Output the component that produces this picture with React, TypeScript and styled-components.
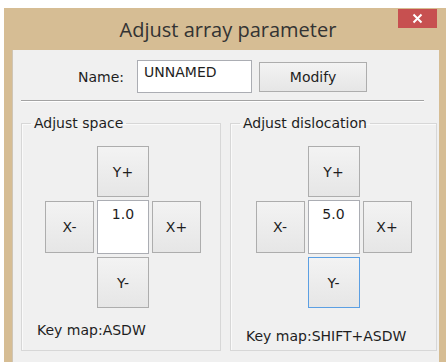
import React from "react";
import styled, { createGlobalStyle } from "styled-components";

const GlobalStyle = createGlobalStyle`
  body {
    margin: 0;
    background: #ffffff;
    font-family: "DejaVu Sans", Verdana, sans-serif;
  }
`;

const Window = styled.div`
  position: relative;
  margin: 8px 0 0 4px;
  width: 442px;
  height: 354px;
  box-sizing: border-box;
  padding: 0 7px 0 8px;
  background: #d6bd94;
  display: flex;
  flex-direction: column;
  overflow: hidden;
`;

const TitleBar = styled.div`
  height: 42px;
  flex-shrink: 0;
  display: flex;
  align-items: center;
  justify-content: center;
  padding-left: 5px;
  font-family: "Open Sans", "Noto Sans", sans-serif;
  font-size: 20px;
  color: #333333;
`;

const CloseButton = styled.div`
  position: absolute;
  top: 1px;
  right: 9px;
  width: 39px;
  height: 19px;
  background: #c75050;
  display: flex;
  align-items: center;
  justify-content: center;
`;

const Body = styled.div`
  flex: 1;
  background: #f0f0f0;
  border-left: 1px solid #cfc5b5;
  padding-top: 10px;
  font-size: 14px;
  color: #1e1e1e;
`;

const NameRow = styled.div`
  display: flex;
  align-items: center;
  height: 33px;
  padding-left: 65px;
`;

const Label = styled.span`
  margin-right: 13px;
`;

const TextBox = styled.div`
  width: 115px;
  height: 33px;
  box-sizing: border-box;
  border: 1px solid #abadb3;
  background: #ffffff;
  padding: 3px 6px;
  line-height: 17px;
`;

const PushButton = styled.div<{ $focused?: boolean }>`
  box-sizing: border-box;
  display: flex;
  align-items: center;
  justify-content: center;
  border: 1px solid ${(p) => (p.$focused ? "#5b9fe3" : "#adadad")};
  background: linear-gradient(#f3f3f3, #e6e6e6);
  color: #1e1e1e;
`;

const ModifyButton = styled(PushButton)`
  width: 108px;
  height: 30px;
  margin-left: 7px;
`;

const Divider = styled.div`
  margin: 7px 15px 0 8px;
  border-top: 1px solid #a3a3a3;
  border-bottom: 1px solid #ffffff;
`;

const Groups = styled.div`
  display: grid;
  grid-template-columns: 200px 207px;
  column-gap: 9px;
  padding-left: 8px;
  margin-top: 13px;
`;

const Group = styled.fieldset`
  margin: 0;
  padding: 0;
  height: 236px;
  box-sizing: border-box;
  border: 1px solid #d7d7d7;
  box-shadow: inset 1px 1px 0 #fafafa;
  min-inline-size: 0;
`;

const Legend = styled.legend`
  margin-left: 9px;
  padding: 0 3px;
  line-height: 16px;
`;

const DPad = styled.div<{ $shift: number }>`
  display: grid;
  grid-template-columns: 49px 52px 49px;
  grid-template-rows: 51px 54px 51px;
  gap: 3px;
  justify-content: center;
  margin-top: 15px;
  padding-left: ${(p) => p.$shift}px;
`;

const PadButton = styled(PushButton)<{ $col: number; $row: number }>`
  grid-column: ${(p) => p.$col};
  grid-row: ${(p) => p.$row};
  height: ${(p) => (p.$row === 2 ? "52px" : "100%")};
  align-self: center;
`;

const ValueBox = styled.div`
  grid-column: 2;
  grid-row: 2;
  box-sizing: border-box;
  border: 1px solid #abadb3;
  background: #ffffff;
  text-align: center;
  padding-top: 5px;
  line-height: 17px;
`;

const KeyMap = styled.div<{ $offset: number }>`
  padding-left: 15px;
  margin-top: ${(p) => p.$offset}px;
  line-height: 16px;
`;

function Pad({ value, shift, focusDown }: { value: string; shift: number; focusDown?: boolean }) {
  return (
    <DPad $shift={shift}>
      <PadButton $col={2} $row={1}>Y+</PadButton>
      <PadButton $col={1} $row={2}>X-</PadButton>
      <ValueBox>{value}</ValueBox>
      <PadButton $col={3} $row={2}>X+</PadButton>
      <PadButton $col={2} $row={3} $focused={focusDown}>Y-</PadButton>
    </DPad>
  );
}

export default function App() {
  return (
    <>
      <GlobalStyle />
      <Window>
        <TitleBar>Adjust array parameter</TitleBar>
        <CloseButton>
          <svg width="11" height="11" viewBox="0 0 11 11">
            <path d="M1.5 1.5 L9.5 9.5 M9.5 1.5 L1.5 9.5" stroke="#ffffff" strokeWidth="2" />
          </svg>
        </CloseButton>
        <Body>
          <NameRow>
            <Label>Name:</Label>
            <TextBox>UNNAMED</TextBox>
            <ModifyButton>Modify</ModifyButton>
          </NameRow>
          <Divider />
          <Groups>
            <Group>
              <Legend>Adjust space</Legend>
              <Pad value="1.0" shift={4} />
              <KeyMap $offset={14}>Key map:ASDW</KeyMap>
            </Group>
            <Group>
              <Legend>Adjust dislocation</Legend>
              <Pad value="5.0" shift={0} focusDown />
              <KeyMap $offset={20}>Key map:SHIFT+ASDW</KeyMap>
            </Group>
          </Groups>
        </Body>
      </Window>
    </>
  );
}
